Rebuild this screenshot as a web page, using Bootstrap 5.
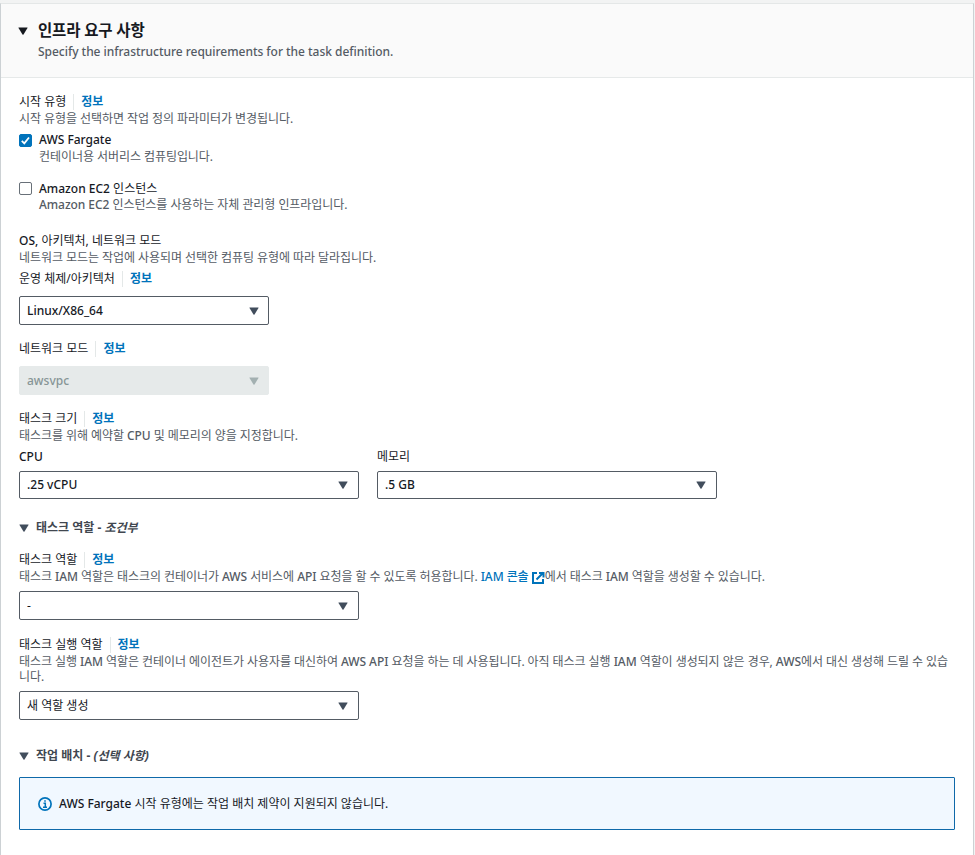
<!DOCTYPE html>
<html lang="ko">
<head>
<meta charset="utf-8">
<meta name="viewport" content="width=device-width, initial-scale=1">
<title>인프라 요구 사항</title>
<link href="https://cdn.jsdelivr.net/npm/bootstrap@5.3.0/dist/css/bootstrap.min.css" rel="stylesheet">
<style>
body{font-family:"Noto Sans","Noto Sans CJK KR",sans-serif;font-size:12px;line-height:16px;color:#16191f;background:#f2f3f3;height:855px;overflow:hidden;font-weight:400}
.panel{margin:3px 1px 0 0;height:860px;background:#fff;border:1px solid #ccd1d4;border-top-color:#e4e7e7}
.panel-head{height:74px;background:#fafafa;border-bottom:1px solid #e6e9e9;padding:16px 18px 0 17px}
.panel-head h1{font-size:15.500px;line-height:20px;font-weight:700;letter-spacing:-.15px}
.panel-head .caret{fill:#16191f;margin:7px 10px 0 0}
.panel-body{padding:16px 18px 0}
.hint{color:#545b64;letter-spacing:-.06px}
.subtitle{margin-top:4px;font-weight:500;letter-spacing:-.03px}
.info{color:#0073bb;font-weight:700;text-decoration:none;border-left:1px solid #e4e8e8;margin-left:7px;padding-left:7px;line-height:15px}
.lnk{color:#0073bb;text-decoration:none;font-weight:500}
.lnk svg{margin-left:-1px}
.la{font-weight:500}
.g1{margin-top:1px}.g5{margin-top:5px}.g6{margin-top:6px}.g7{margin-top:7px}.g9{margin-top:9px}
.g13{margin-top:13px}.g17{margin-top:17px}.g20{margin-top:20px}.g21{margin-top:21px}.g28{margin-top:28px}
.form-check-input[type=checkbox].check{width:13px;height:13px;border-radius:2px;margin:2px 0 0;flex:none;border:1px solid #687078}
.form-check-input[type=checkbox].check.up{margin-top:1px}
.form-check-input[type=checkbox].check:checked{background-color:#0073bb;border-color:#0073bb;background-size:13px 13px;background-image:url("data:image/svg+xml,%3Csvg xmlns='http://www.w3.org/2000/svg' viewBox='0 0 13 13'%3E%3Cpath fill='none' stroke='%23fff' stroke-width='1.800' d='M2.800 6.800 5.300 9.300 10 3.500'/%3E%3C/svg%3E")}
.check-text{padding-left:7px}
.pick{height:29px;border:1px solid #545b64;border-radius:2px;padding:0 9px 0 7px;background:#fff;color:#16191f}
.pick.off{background:#e6eaea;border-color:#e6eaea;color:#879596}
.pick.flat{height:28px}
.w250{width:250px}.w340{width:340px}
.w340.pick,.w340 .pick{padding-right:10px}
.cols{gap:18px}
.caret{width:10px;height:8px;fill:#414d5c;flex:none}
.off .caret{fill:#a3b0b1}
.sect{color:#414750;font-weight:700;gap:7px}
.long{line-height:15px;word-break:break-all}
.notice{height:53px;background:#f1f8ff;border:1px solid #0f69a9;border-radius:1px;padding:0 18px;gap:7px}
</style>
</head>
<body>
<svg class="d-none"><symbol id="tri" viewBox="0 0 10 8"><path d="M.8.5h8.400q.6 0 .3.6L5.500 7.500q-.5.6-1 0L.5 1.100Q.2.5.8.5z"/></symbol></svg>
<main class="panel">
<header class="panel-head d-flex">
  <svg class="caret"><use href="#tri"/></svg>
  <div><h1 class="mb-0">인프라 요구 사항</h1><div class="hint subtitle">Specify the infrastructure requirements for the task definition.</div></div>
</header>
<div class="panel-body">
  <div class="d-flex"><span>시작 유형</span><a class="info">정보</a></div>
  <div class="hint g1">시작 유형을 선택하면 작업 정의 파라미터가 변경됩니다.</div>
  <div class="d-flex g5"><input type="checkbox" class="form-check-input check" checked><div class="check-text"><div class="la">AWS Fargate</div><div class="hint g1">컨테이너용 서버리스 컴퓨팅입니다.</div></div></div>
  <div class="d-flex mt-3"><input type="checkbox" class="form-check-input check up"><div class="check-text"><div><span class="la">Amazon EC2</span> 인스턴스</div><div class="hint"><span class="la">Amazon EC2</span> 인스턴스를 사용하는 자체 관리형 인프라입니다.</div></div></div>
  <div class="g20"><span class="la">OS,</span> 아키텍처, 네트워크 모드</div>
  <div class="hint g1">네트워크 모드는 작업에 사용되며 선택한 컴퓨팅 유형에 따라 달라집니다.</div>
  <div class="d-flex g5"><span>운영 체제/아키텍처</span><a class="info">정보</a></div>
  <div class="pick w250 d-flex align-items-center justify-content-between g9"><span class="la">Linux/X86_64</span><svg class="caret"><use href="#tri"/></svg></div>
  <div class="d-flex mt-3"><span>네트워크 모드</span><a class="info">정보</a></div>
  <div class="pick off w250 d-flex align-items-center justify-content-between g9"><span class="la">awsvpc</span><svg class="caret"><use href="#tri"/></svg></div>
  <div class="d-flex mt-3"><span>태스크 크기</span><a class="info">정보</a></div>
  <div class="hint g1">태스크를 위해 예약할 <span class="la">CPU</span> 및 메모리의 양을 지정합니다.</div>
  <div class="d-flex cols g5">
    <div class="w340"><div class="la">CPU</div><div class="pick flat d-flex align-items-center justify-content-between g6"><span class="la">.25 vCPU</span><svg class="caret"><use href="#tri"/></svg></div></div>
    <div class="w340"><div>메모리</div><div class="pick flat d-flex align-items-center justify-content-between g6"><span class="la">.5 GB</span><svg class="caret"><use href="#tri"/></svg></div></div>
  </div>
  <div class="sect d-flex align-items-center g21"><svg class="caret"><use href="#tri"/></svg><span>태스크 역할 - <em>조건부</em></span></div>
  <div class="d-flex mt-3"><span>태스크 역할</span><a class="info">정보</a></div>
  <div class="hint g1">태스크 <span class="la">IAM</span> 역할은 태스크의 컨테이너가 <span class="la">AWS</span> 서비스에 <span class="la">API</span> 요청을 할 수 있도록 허용합니다. <a class="lnk">IAM 콘솔 <svg width="14" height="14" viewBox="0 0 14 14" fill="none" stroke="#0073bb" stroke-width="2"><path d="M6 2H2v10h10V8M8 2h4.500v4.500M12.500 1.500L5.500 8.500"/></svg></a>에서 태스크 <span class="la">IAM</span> 역할을 생성할 수 있습니다.</div>
  <div class="pick w340 d-flex align-items-center justify-content-between g6"><span>-</span><svg class="caret"><use href="#tri"/></svg></div>
  <div class="d-flex g17"><span>태스크 실행 역할</span><a class="info">정보</a></div>
  <div class="hint long g1">태스크 실행 <span class="la">IAM</span> 역할은 컨테이너 에이전트가 사용자를 대신하여 <span class="la">AWS API</span> 요청을 하는 데 사용됩니다. 아직 태스크 실행 <span class="la">IAM</span> 역할이 생성되지 않은 경우, <span class="la">AWS</span>에서 대신 생성해 드릴 수 있습니다.</div>
  <div class="pick w340 d-flex align-items-center justify-content-between g7"><span>새 역할 생성</span><svg class="caret"><use href="#tri"/></svg></div>
  <div class="sect d-flex align-items-center g28"><svg class="caret"><use href="#tri"/></svg><span>작업 배치 - <em>(선택 사항)</em></span></div>
  <div class="notice d-flex align-items-center g13"><svg width="14" height="14" viewBox="0 0 14 14" fill="none" stroke="#0073bb"><circle cx="7" cy="7" r="6.100" stroke-width="1.700"/><path d="M5.500 6.300H7.300V10M5 10.200h4M6.200 4h1.600" stroke-width="1.500"/></svg><span><span class="la">AWS Fargate</span> 시작 유형에는 작업 배치 제약이 지원되지 않습니다.</span></div>
</div>
</main>
<script src="https://cdn.jsdelivr.net/npm/bootstrap@5.3.0/dist/js/bootstrap.bundle.min.js"></script>
</body>
</html>
